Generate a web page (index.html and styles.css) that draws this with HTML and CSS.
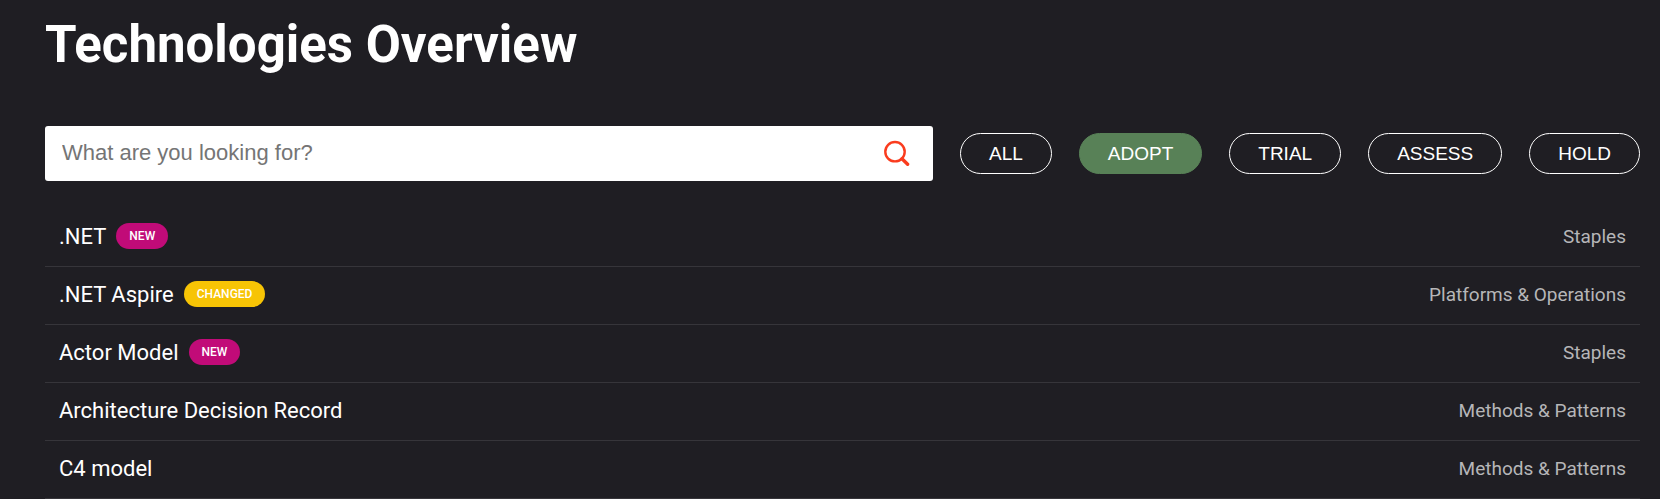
FILE: index.html
```html
<!DOCTYPE html>
<html lang="en">
<head>
    <meta charset="UTF-8">
    <meta name="viewport" content="width=device-width, initial-scale=1.0">
    <title>Technologies Overview</title>
    <link rel="stylesheet" href="styles.css">
</head>
<body>
    <main class="overview">
        <h1>Technologies Overview</h1>
        <div class="toolbar">
            <form class="search" role="search">
                <input type="search" class="search-input" placeholder="What are you looking for?" aria-label="Search technologies">
                <button type="submit" class="search-button" aria-label="Search">
                    <svg width="27" height="27" viewBox="0 0 27 27" fill="none" stroke="currentColor" stroke-linecap="round">
                        <circle cx="12" cy="11.7" r="9.7" stroke-width="2.4"/>
                        <path d="M19 18.8L24.6 24.2" stroke-width="3.4"/>
                    </svg>
                </button>
            </form>
            <div class="filters">
                <button type="button" class="filter">ALL</button>
                <button type="button" class="filter active" aria-pressed="true">ADOPT</button>
                <button type="button" class="filter">TRIAL</button>
                <button type="button" class="filter">ASSESS</button>
                <button type="button" class="filter">HOLD</button>
            </div>
        </div>
        <ul class="items">
            <li><a href="#" class="item"><span class="title">.NET</span><span class="badge new">New</span><span class="category">Staples</span></a></li>
            <li><a href="#" class="item"><span class="title">.NET Aspire</span><span class="badge changed">Changed</span><span class="category">Platforms &amp; Operations</span></a></li>
            <li><a href="#" class="item"><span class="title">Actor Model</span><span class="badge new">New</span><span class="category">Staples</span></a></li>
            <li><a href="#" class="item"><span class="title">Architecture Decision Record</span><span class="category">Methods &amp; Patterns</span></a></li>
            <li><a href="#" class="item"><span class="title">C4 model</span><span class="category">Methods &amp; Patterns</span></a></li>
        </ul>
    </main>
</body>
</html>
```
FILE: styles.css
```css
* { margin: 0; padding: 0; box-sizing: border-box; }
body {
    font-family: Roboto, sans-serif;
    background: #1f1e23;
    color: #fff;
}
.overview {
    padding: 14px 20px 0 45px;
}
h1 {
    font-size: 51px;
    font-weight: 700;
    line-height: 62px;
    margin-bottom: 50px;
}
.toolbar {
    display: flex;
    align-items: center;
    gap: 27px;
    margin-bottom: 28px;
}
.search {
    display: flex;
    align-items: center;
    flex: 1;
    background: #fff;
    border-radius: 3px;
    padding-right: 23px;
}
.search-input {
    flex: 1;
    min-width: 0;
    height: 55px;
    padding-left: 17px;
    padding-bottom: 1px;
    border: none;
    outline: none;
    background: transparent;
    font-family: "Liberation Sans", Arial, sans-serif;
    font-size: 22px;
    color: #1f1e23;
    appearance: none;
}
.search-input::placeholder {
    color: #757575;
}
.search-button {
    display: flex;
    border: none;
    background: none;
    color: #fa3c1e;
    cursor: pointer;
}
.filters {
    display: flex;
    gap: 27px;
}
.filter {
    height: 41px;
    padding: 0 28px;
    border: 1px solid #fff;
    border-radius: 21px;
    background: transparent;
    color: #fff;
    font-family: "Liberation Sans", Arial, sans-serif;
    font-size: 19px;
    cursor: pointer;
}
.filter.active {
    background: #588157;
    border-color: #588157;
}
.items {
    list-style: none;
}
.items li {
    border-bottom: 1px solid #36353a;
}
.item {
    display: flex;
    align-items: center;
    gap: 10px;
    padding: 13px 14px 15px;
    color: #fff;
    text-decoration: none;
}
.title {
    font-size: 22px;
    line-height: 29px;
}
.badge {
    margin-bottom: 2px;
    padding: 0 13px;
    border-radius: 13px;
    font-size: 12px;
    font-weight: 500;
    line-height: 26px;
    text-transform: uppercase;
}
.badge.new {
    background: #c10b78;
}
.badge.changed {
    background: #f7c405;
}
.category {
    margin-left: auto;
    font-size: 19px;
    color: #b6b6b8;
}
```
